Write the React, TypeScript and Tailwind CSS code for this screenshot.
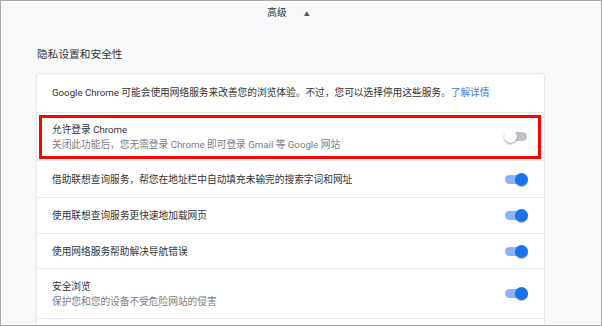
import React from 'react';

const font = "font-['Roboto','Noto_Sans_CJK_SC',sans-serif]";

const Toggle: React.FC<{ on: boolean }> = ({ on }) => (
  <div className="relative w-[24px] h-[13px] flex items-center">
    <div className={`w-[22px] h-[9px] rounded-full ml-[1px] ${on ? 'bg-[#8ab4f8]' : 'bg-[#bdc1c6]'}`} />
    {on ? (
      <div className="absolute right-0 top-0 w-[13px] h-[13px] rounded-full bg-[#1a73e8] shadow-[0_1px_1px_rgba(0,0,0,0.3)]" />
    ) : (
      <div className="absolute left-0 top-0 w-[13px] h-[13px] rounded-full bg-white shadow-[0_1px_2px_rgba(0,0,0,0.4)]" />
    )}
  </div>
);

interface RowProps {
  title: string;
  sub?: string;
  on: boolean;
  h: string;
  highlight?: boolean;
}

const Row: React.FC<RowProps> = ({ title, sub, on, h, highlight }) => (
  <div className={`relative flex items-center justify-between pl-[15px] pr-[16px] border-t border-[#e8eaed] ${h}`}>
    <div className="flex flex-col">
      <span className="text-[9.7px] leading-[15px] text-[#333]">{title}</span>
      {sub && <span className="text-[9.7px] leading-[15px] text-[#7a7d82]">{sub}</span>}
    </div>
    <Toggle on={on} />
    {highlight && (
      <div className="absolute left-[2px] right-[3px] top-[2px] bottom-[1px] border-[3px] border-[#ff0000]" />
    )}
  </div>
);

export default function App() {
  return (
    <div className={`w-[602px] h-[326px] overflow-hidden border border-[#a8a8a8] bg-[#f8f9fa] ${font}`}>
      <div className="ml-[36px] w-[507px]">
        <div className="h-[24px] flex items-center justify-center gap-[17px] pr-[4px]">
          <span className="text-[9.7px] text-[#333]">高级</span>
          <span className="text-[6px] text-[#555]">▲</span>
        </div>
        <div className="mt-[23px] h-[14px] leading-[14px] text-[10.7px] text-[#333]">隐私设置和安全性</div>
        <div className="mt-[12px] bg-white rounded-t-[2px] shadow-[0_0_2px_rgba(60,64,67,0.3)]">
          <div className="h-[38px] flex items-center pl-[15px] text-[9.7px] text-[#333]">
            <span>
              Google Chrome 可能会使用网络服务来改善您的浏览体验。不过，您可以选择停用这些服务。
              <span className="text-[#3b78e7]">了解详情</span>
            </span>
          </div>
          <Row
            h="h-[48px]"
            title="允许登录 Chrome"
            sub="关闭此功能后，您无需登录 Chrome 即可登录 Gmail 等 Google 网站"
            on={false}
            highlight
          />
          <Row h="h-[37px]" title="借助联想查询服务，帮您在地址栏中自动填充未输完的搜索字词和网址" on />
          <Row h="h-[36px]" title="使用联想查询服务更快速地加载网页" on />
          <Row h="h-[35px]" title="使用网络服务帮助解决导航错误" on />
          <Row h="h-[50px]" title="安全浏览" sub="保护您和您的设备不受危险网站的侵害" on />
          <Row h="h-[36px]" title="" on={false} />
        </div>
      </div>
    </div>
  );
}
